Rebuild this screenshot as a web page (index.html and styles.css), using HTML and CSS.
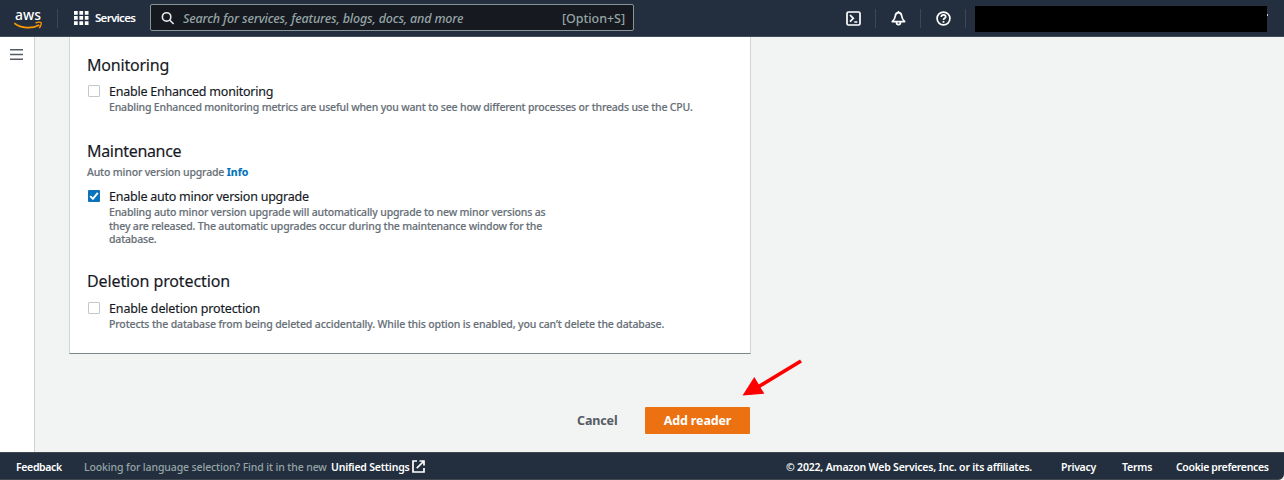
FILE: index.html
```html
<!DOCTYPE html>
<html lang="en">
<head>
<meta charset="utf-8">
<title>Add reader</title>
<link rel="stylesheet" href="styles.css">
</head>
<body>
<div class="app">
  <header class="topbar">
    <svg class="logo" width="30" height="30" viewBox="0 -6 30 30">
      <text class="logo-text" x="1" y="11.500" textLength="26" lengthAdjust="spacingAndGlyphs">aws</text>
      <path d="M.3 15.200C7 20.700 18 21 25.300 17" fill="none" stroke="#f90" stroke-width="1.700"/>
      <path d="M21.600 15.100c1.800-1.100 4.800-1.200 5.500-.5.5.7-.2 3.900-2 5.300" fill="none" stroke="#f90" stroke-width="1.300"/>
    </svg>
    <span class="divider divider-logo"></span>
    <svg class="grid-icon" width="15" height="14" viewBox="0 0 15 14" fill="#fff">
      <path d="M0 0h3.700v3.700H0zM5.400 0h3.700v3.700H5.400zM10.800 0h3.700v3.700h-3.700zM0 5.100h3.700v3.700H0zM5.400 5.100h3.700v3.700H5.400zM10.800 5.100h3.700v3.700h-3.700zM0 10.200h3.700v3.700H0zM5.400 10.200h3.700v3.700H5.400zM10.800 10.200h3.700v3.700h-3.700z"/>
    </svg>
    <span class="services">Services</span>
    <div class="search">
      <svg width="14" height="14" viewBox="0 0 14 14" fill="none" stroke="#e8eaea" stroke-width="1.600"><circle cx="5.600" cy="5.900" r="4.200"/><path d="M8.600 9l4 4"/></svg>
      <span class="search-hint">Search for services, features, blogs, docs, and more</span>
      <span class="search-key">[Option+S]</span>
    </div>
    <div class="tools">
      <svg width="15" height="15" viewBox="0 0 15 15" fill="none" stroke="#fff" stroke-width="1.700"><rect x="1" y="1" width="13" height="13" rx="1.500"/><path d="M4 4l3.300 3.300L4 10.600M8.300 11h3"/></svg>
      <span class="divider"></span>
      <svg width="15" height="15" viewBox="0 0 15 15" fill="none" stroke="#fff" stroke-width="1.700" stroke-linejoin="round"><path d="M7.500 1.700C5.300 1.700 4.500 3 4.300 5 4 7.500 3.200 8.800 1.300 10.600h12.400C11.800 8.800 11 7.500 10.700 5c-.2-2-1-3.300-3.200-3.300zM7.500 0v2M5.500 11.300c0 3.200 4 3.200 4 0"/></svg>
      <span class="divider"></span>
      <svg width="15" height="15" viewBox="0 0 15 15" fill="none" stroke="#fff" stroke-width="1.700"><circle cx="7.500" cy="7.500" r="6.400"/><path d="M5.300 6c0-2.900 4.400-2.700 4.400-.2C9.700 7.400 7.500 7.200 7.500 9M7.500 10v1.700"/></svg>
      <span class="divider"></span>
    </div>
    <div class="account"></div>
    <span class="caret"></span>
  </header>

  <div class="body">
    <nav class="rail">
      <svg width="13" height="12" viewBox="0 0 13 12" fill="#545b64"><path d="M0 0h13v1.500H0zM0 4.800h13v1.500H0zM0 9.600h13v1.500H0z"/></svg>
    </nav>
    <main class="content">
      <section class="panel">
        <div class="group">
          <h2 class="t-monitoring">Monitoring</h2>
          <div class="option">
            <span class="box"></span>
            <div class="option-text">
              <div class="label l-monitoring">Enable Enhanced monitoring</div>
              <div class="hint h-monitoring">Enabling Enhanced monitoring metrics are useful when you want to see how different processes or threads use the CPU.</div>
            </div>
          </div>
        </div>
        <div class="group group-maintenance">
          <h2 class="t-maintenance">Maintenance</h2>
          <div class="hint field">Auto minor version upgrade <a class="info">Info</a></div>
          <div class="option option-upgrade">
            <span class="box checked"><svg width="12" height="12" viewBox="0 0 12 12" fill="none" stroke="#fff" stroke-width="1.900"><path d="M2.200 6.200l2.700 2.700 4.900-6"/></svg></span>
            <div class="option-text">
              <div class="label l-upgrade">Enable auto minor version upgrade</div>
              <div class="hint h-upgrade">Enabling auto minor version upgrade will automatically upgrade to new minor versions as<br>they are released. The automatic upgrades occur during the maintenance window for the<br>database.</div>
            </div>
          </div>
        </div>
        <div class="group group-deletion">
          <h2 class="t-deletion">Deletion protection</h2>
          <div class="option option-deletion">
            <span class="box"></span>
            <div class="option-text">
              <div class="label l-deletion">Enable deletion protection</div>
              <div class="hint h-deletion">Protects the database from being deleted accidentally. While this option is enabled, you can’t delete the database.</div>
            </div>
          </div>
        </div>
      </section>
      <div class="actions">
        <span class="cancel">Cancel</span>
        <div class="submit"><span>Add reader</span>
          <svg class="arrow" width="62" height="40" viewBox="0 0 62 40"><path d="M60 3L17 29" stroke="#fe0000" stroke-width="3.600"/><path d="M1.500 37.500L13.300 19 23.300 35.700z" fill="#fe0000"/></svg>
        </div>
      </div>
    </main>
  </div>

  <footer class="footer">
    <span class="feedback">Feedback</span>
    <span class="language">Looking for language selection? Find it in the new</span>
    <span class="unified">Unified Settings</span>
    <svg class="ext" width="13" height="13" viewBox="0 0 13 13" fill="none" stroke="#fff" stroke-width="1.700"><path d="M5 1H1v11h11V8M7.500 1H12v4.500M12 1L4.800 8.200"/></svg>
    <span class="copyright">© 2022, Amazon Web Services, Inc. or its affiliates.</span>
    <span class="privacy">Privacy</span>
    <span class="terms">Terms</span>
    <span class="cookies">Cookie preferences</span>
  </footer>
</div>
</body>
</html>
```
FILE: styles.css
```css
* { box-sizing: border-box; }
body {
  margin: 0;
  font-family: "Noto Sans", "Open Sans", sans-serif;
  color: #16191f;
  background: #f2f3f3;
}
svg { display: block; flex: none; }
.app { display: flex; flex-direction: column; width: 1284px; height: 480px; overflow: hidden; white-space: nowrap; }

.topbar { display: flex; align-items: center; height: 37px; flex: none; background: #232f3e; border-bottom: 1px solid #414d5c; color: #fff; }
.logo { margin: -3px 0 0 14px; }
.logo-text { font-size: 15px; font-weight: 500; fill: #fff; }
.divider { width: 1px; height: 19px; background: #414750; flex: none; }
.divider-logo { margin: 0 16px 0 13px; }
.services { width: 41px; margin: -2px 0 0 6px; font-size: 11.500px; font-weight: 600; letter-spacing: -0.700px; }
.search { display: flex; align-items: center; width: 484px; height: 27px; margin: -1px 0 0 14px; padding: 1px 8px 0 10px; background: #16191f; border: 1px solid #879596; border-radius: 2px; color: #95a5a6; }
.search-hint { margin-left: 8px; font-size: 12.500px; font-style: italic; font-weight: 500; letter-spacing: -0.160px; }
.search-key { margin-left: auto; font-size: 12.500px; font-weight: 500; letter-spacing: -0.050px; }
.tools { display: flex; align-items: center; justify-content: space-between; width: 120px; margin-left: 212px; }
.account { width: 292px; height: 26px; margin: 2px 0 0 9px; background: #000; }
.caret { width: 1px; height: 2px; margin-top: -6px; background: #ccd0d4; }

.body { display: flex; flex: none; height: 415px; }
.rail { width: 35px; padding: 12px 0 0 10px; background: #fff; border-right: 1px solid #cbd3d3; }
.content { width: 716px; padding-left: 34px; }
.panel { height: 317px; padding: 17px 18px 0 18px; background: #fff; border: solid #d0d5d5; border-width: 0 1px 1px; border-bottom-color: #7b8889; }
h2 { margin: 0 0 0 -1px; font-size: 16px; line-height: 22px; font-weight: 400; -webkit-text-stroke: 0.150px; }
.t-monitoring { letter-spacing: -0.200px; }
.t-maintenance { letter-spacing: -0.320px; }
.t-deletion { letter-spacing: -0.120px; }
.group-maintenance { margin-top: 25px; }
.group-deletion { margin-top: 23px; }
.option { display: flex; margin-top: 7px; }
.option-upgrade { margin-top: 9px; }
.option-deletion { margin-top: 8px; }
.box { width: 12px; height: 12px; margin-top: 2px; flex: none; border: 1px solid #c0caca; border-radius: 1px; background: #fff; }
.checked { border: 0; background: #0a73bb; }
.option-text { margin-left: 9px; }
.label { font-size: 12.500px; line-height: 18px; -webkit-text-stroke: 0.150px; }
.l-monitoring { letter-spacing: -0.230px; }
.l-upgrade { letter-spacing: -0.240px; }
.l-deletion { letter-spacing: -0.150px; }
.hint { font-size: 10.500px; line-height: 13.500px; font-weight: 500; letter-spacing: -0.170px; color: #687078; -webkit-text-stroke: 0.150px; }
.h-monitoring { letter-spacing: -0.177px; }
.h-deletion { letter-spacing: -0.135px; }
.field { margin: 4px 0 0 -1px; }
.info { color: #0073bb; font-weight: 700; letter-spacing: 0; }

.actions { display: flex; align-items: center; justify-content: flex-end; height: 27px; margin-top: 53px; padding-right: 1px; font-size: 12.500px; font-weight: 700; letter-spacing: -0.130px; }
.cancel { color: #545b64; width: 40px; margin-right: 28px; }
.submit { position: relative; display: flex; align-items: center; justify-content: center; width: 105px; height: 27px; background: #ec7211; color: #fff; border-radius: 1px; }
.arrow { position: absolute; left: 96px; top: -49px; }

.footer { display: flex; align-items: center; height: 28px; padding: 1px 16px 0; background: #232f3e; border: solid #414750; border-width: 1px 0; color: #fff; font-size: 10.500px; font-weight: 600; border-bottom-right-radius: 6px; }
.feedback { width: 46px; letter-spacing: -0.350px; }
.language { width: 243px; margin-left: 22px; color: #95a5a6; font-weight: 500; letter-spacing: -0.120px; }
.unified { width: 78px; margin-left: 4px; letter-spacing: -0.200px; }
.ext { margin-left: 3px; margin-top: -1px; }
.copyright { width: 246px; margin-left: auto; letter-spacing: -0.190px; }
.privacy { width: 35px; margin-left: 29px; letter-spacing: -0.280px; }
.terms { width: 30px; margin-left: 26px; letter-spacing: -0.200px; }
.cookies { width: 93px; margin-left: 24px; margin-right: -1px; letter-spacing: -0.330px; }
```
